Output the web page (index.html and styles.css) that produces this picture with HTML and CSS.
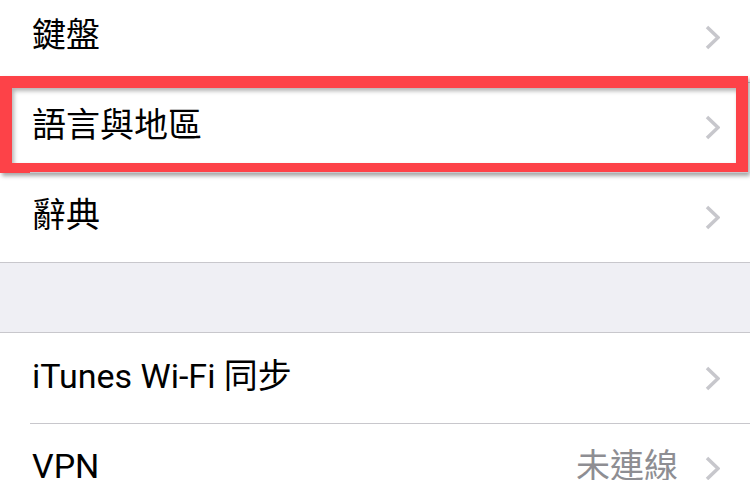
FILE: index.html
```html
<!DOCTYPE html>
<html lang="zh-Hant">
<head>
  <meta charset="UTF-8">
  <meta name="viewport" content="width=device-width, initial-scale=1.0">
  <title>一般</title>
  <link rel="stylesheet" href="styles.css">
</head>
<body>

  <div class="settings">
    <ul class="group">
      <li class="row">
        <span class="label">鍵盤</span>
        <svg class="chevron" viewBox="0 0 15 25"><polyline points="2,2 13,12.5 2,23"/></svg>
      </li>
      <li class="row highlighted">
        <span class="label">語言與地區</span>
        <svg class="chevron" viewBox="0 0 15 25"><polyline points="2,2 13,12.5 2,23"/></svg>
        <div class="marker"></div>
      </li>
      <li class="row">
        <span class="label">辭典</span>
        <svg class="chevron" viewBox="0 0 15 25"><polyline points="2,2 13,12.5 2,23"/></svg>
      </li>
    </ul>

    <div class="spacer"></div>

    <ul class="group">
      <li class="row">
        <span class="label">iTunes Wi-Fi 同步</span>
        <svg class="chevron" viewBox="0 0 15 25"><polyline points="2,2 13,12.5 2,23"/></svg>
      </li>
      <li class="row">
        <span class="label">VPN</span>
        <span class="value">未連線</span>
        <svg class="chevron" viewBox="0 0 15 25"><polyline points="2,2 13,12.5 2,23"/></svg>
      </li>
    </ul>
  </div>

</body>
</html>
```

FILE: styles.css
```css
* {
  margin: 0;
  padding: 0;
  box-sizing: border-box;
}

body {
  font-family: Roboto, "Noto Sans CJK TC", sans-serif;
  background-color: #ffffff;
  color: #000;
  overflow: hidden;
}

.settings {
  margin-top: -8px;
}

.group {
  list-style: none;
  background-color: #fff;
  border-bottom: 1px solid #c8c7cc;
}

.row {
  position: relative;
  height: 90px;
  display: flex;
  align-items: center;
  padding: 0 30px 0 32px;
  font-size: 34px;
}

/* inset separator between rows */
.row + .row::before {
  content: '';
  position: absolute;
  top: 0;
  left: 30px;
  right: 0;
  height: 1px;
  background-color: #c8c7cc;
}

.label,
.value {
  line-height: 40px;
  padding-bottom: 5px;
  white-space: nowrap;
}

.label {
  flex: 1;
}

.value {
  color: #8e8e93;
  margin-right: 27px;
}

.chevron {
  width: 15px;
  height: 25px;
  fill: none;
  stroke: #c7c7cc;
  stroke-width: 3.5;
}

.spacer {
  height: 70px;
  background-color: #efeff4;
  border-bottom: 1px solid #c8c7cc;
}

/* red annotation frame over the second row */
.marker {
  position: absolute;
  top: -6px;
  left: 0;
  width: 748px;
  height: 97px;
  border: 12px solid #fd4248;
  border-bottom-width: 10px;
  box-shadow: 2px 3px 4px rgba(0, 0, 0, 0.35), inset 2px 3px 4px rgba(0, 0, 0, 0.3);
}
```
